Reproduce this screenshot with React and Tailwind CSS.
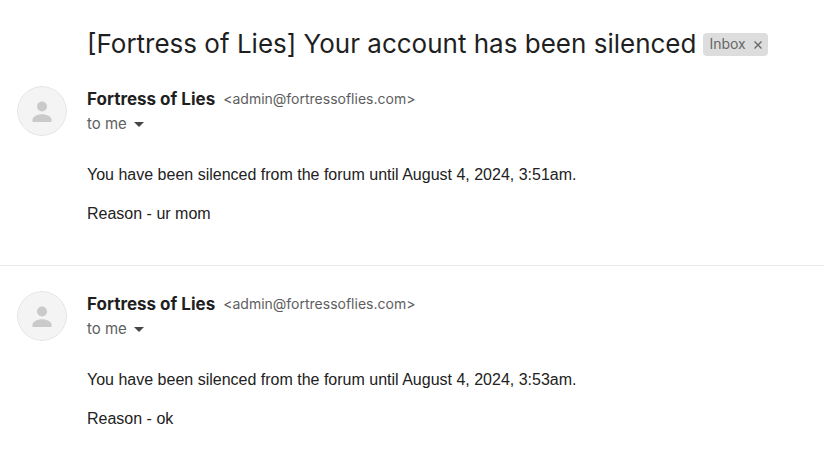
import React from 'react';

const messages = [
  { id: 1, until: 'August 4, 2024, 3:51am', reason: 'ur mom' },
  { id: 2, until: 'August 4, 2024, 3:53am', reason: 'ok' },
];

const Avatar = () => (
  <svg
    viewBox="0 0 50 50"
    className="size-[50px] shrink-0 rounded-full"
    role="img"
    aria-label="Fortress of Lies"
  >
    <circle cx="25" cy="25" r="24.5" fill="#f4f4f4" stroke="#e2e2e2" />
    <circle cx="25" cy="20.500" r="5" fill="#cacaca" />
    <path d="M15.500 36v-2.500c0-3.500 6.300-5.200 9.500-5.200s9.500 1.700 9.500 5.200V36z" fill="#cacaca" />
  </svg>
);

const Message = ({ until, reason }) => (
  <article className="flex gap-5 px-[17px] pt-[25px] pb-[39px]">
    <Avatar />
    <div className="min-w-0 flex-1">
      <header className="text-[#5e5e5e]">
        <div className="flex items-center gap-2 leading-[26px]">
          <h2 className="text-[17px] leading-[26px] font-bold text-[#1f1f1f]">Fortress of Lies</h2>
          <span className="text-sm leading-[26px]">&lt;admin@fortressoflies.com&gt;</span>
        </div>
        <button type="button" className="flex items-center gap-[7px] text-[15px] leading-6">
          to me
          <svg viewBox="0 0 10 5" className="h-[5px] w-[10px]" fill="#444746" aria-hidden="true">
            <path d="M0 0h10L5 5z" />
          </svg>
        </button>
      </header>
      <div className="mt-[27px] space-y-[15px] font-['Liberation_Sans',Arial,sans-serif] text-base leading-6 text-[#222222]">
        <p>You have been silenced from the forum until {until}.</p>
        <p>Reason - {reason}</p>
      </div>
    </div>
  </article>
);

const App = () => {
  return (
    <main className="min-h-screen bg-white pt-7 font-['Inter',sans-serif]">
      <div className="flex items-center gap-[7px] pr-4 pl-[87px]">
        <h1 className="text-[26px] leading-8 text-[#1f1f1f]">
          [Fortress of Lies] Your account has been silenced
        </h1>
        <div className="flex h-[23px] items-center gap-2 rounded bg-[#dddddd] px-[6px] text-sm text-[#666666]">
          Inbox
          <button type="button" aria-label="Remove label Inbox">
            <svg viewBox="0 0 8 8" className="mt-px size-2" stroke="#666666" strokeWidth="1.3" aria-hidden="true">
              <path d="M0.500 0.500l7 7M7.500 0.500l-7 7" />
            </svg>
          </button>
        </div>
      </div>
      <div className="mt-px divide-y divide-[#ebebeb]">
        {messages.map((message) => (
          <Message key={message.id} until={message.until} reason={message.reason} />
        ))}
      </div>
    </main>
  );
};

export default App;
